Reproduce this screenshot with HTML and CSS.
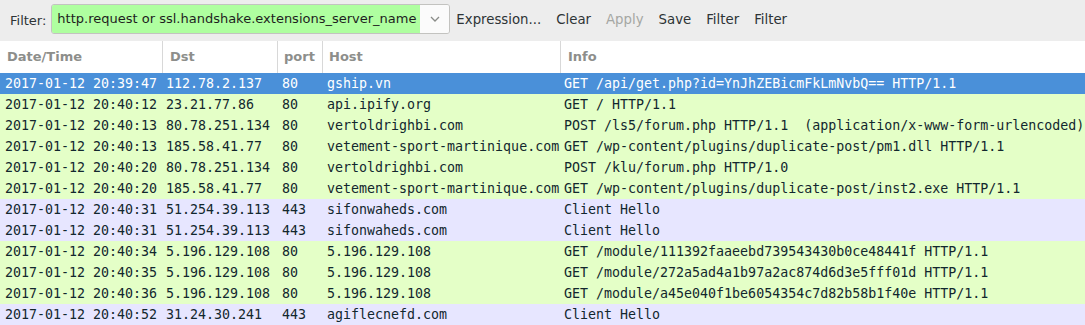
FILE: index.html
```html
<!DOCTYPE html>
<html>
<head>
  <meta charset="utf-8">
  <title>Packet List</title>
  <link rel="stylesheet" href="styles.css">
</head>
<body>
  <div class="toolbar">
    <span class="filter-label">Filter:</span>
    <div class="filter-box">
      <div class="filter-text">http.request or ssl.handshake.extensions_server_name</div>
      <div class="filter-drop">
        <svg width="10" height="6" viewBox="0 0 10 6"><polyline points="1,1 5,5 9,1" fill="none" stroke="#8a8c88" stroke-width="1.3"/></svg>
      </div>
    </div>
    <div class="tool-buttons">
      <span class="tool-btn">Expression...</span>
      <span class="tool-btn">Clear</span>
      <span class="tool-btn disabled">Apply</span>
      <span class="tool-btn">Save</span>
      <span class="tool-btn">Filter</span>
      <span class="tool-btn">Filter</span>
    </div>
  </div>

  <div class="list">
    <div class="row header">
      <div class="cell">Date/Time</div>
      <div class="cell">Dst</div>
      <div class="cell">port</div>
      <div class="cell">Host</div>
      <div class="cell">Info</div>
    </div>

    <div class="row selected">
      <div class="cell">2017-01-12 20:39:47</div><div class="cell">112.78.2.137</div><div class="cell">80</div><div class="cell">gship.vn</div><div class="cell">GET /api/get.php?id=YnJhZEBicmFkLmNvbQ== HTTP/1.1</div>
    </div>
    <div class="row http">
      <div class="cell">2017-01-12 20:40:12</div><div class="cell">23.21.77.86</div><div class="cell">80</div><div class="cell">api.ipify.org</div><div class="cell">GET / HTTP/1.1</div>
    </div>
    <div class="row http">
      <div class="cell">2017-01-12 20:40:13</div><div class="cell">80.78.251.134</div><div class="cell">80</div><div class="cell">vertoldrighbi.com</div><div class="cell">POST /ls5/forum.php HTTP/1.1  (application/x-www-form-urlencoded)</div>
    </div>
    <div class="row http">
      <div class="cell">2017-01-12 20:40:13</div><div class="cell">185.58.41.77</div><div class="cell">80</div><div class="cell">vetement-sport-martinique.com</div><div class="cell">GET /wp-content/plugins/duplicate-post/pm1.dll HTTP/1.1</div>
    </div>
    <div class="row http">
      <div class="cell">2017-01-12 20:40:20</div><div class="cell">80.78.251.134</div><div class="cell">80</div><div class="cell">vertoldrighbi.com</div><div class="cell">POST /klu/forum.php HTTP/1.0</div>
    </div>
    <div class="row http">
      <div class="cell">2017-01-12 20:40:20</div><div class="cell">185.58.41.77</div><div class="cell">80</div><div class="cell">vetement-sport-martinique.com</div><div class="cell">GET /wp-content/plugins/duplicate-post/inst2.exe HTTP/1.1</div>
    </div>
    <div class="row tcp">
      <div class="cell">2017-01-12 20:40:31</div><div class="cell">51.254.39.113</div><div class="cell">443</div><div class="cell">sifonwaheds.com</div><div class="cell">Client Hello</div>
    </div>
    <div class="row tcp">
      <div class="cell">2017-01-12 20:40:31</div><div class="cell">51.254.39.113</div><div class="cell">443</div><div class="cell">sifonwaheds.com</div><div class="cell">Client Hello</div>
    </div>
    <div class="row http">
      <div class="cell">2017-01-12 20:40:34</div><div class="cell">5.196.129.108</div><div class="cell">80</div><div class="cell">5.196.129.108</div><div class="cell">GET /module/111392faaeebd739543430b0ce48441f HTTP/1.1</div>
    </div>
    <div class="row http">
      <div class="cell">2017-01-12 20:40:35</div><div class="cell">5.196.129.108</div><div class="cell">80</div><div class="cell">5.196.129.108</div><div class="cell">GET /module/272a5ad4a1b97a2ac874d6d3e5fff01d HTTP/1.1</div>
    </div>
    <div class="row http">
      <div class="cell">2017-01-12 20:40:36</div><div class="cell">5.196.129.108</div><div class="cell">80</div><div class="cell">5.196.129.108</div><div class="cell">GET /module/a45e040f1be6054354c7d82b58b1f40e HTTP/1.1</div>
    </div>
    <div class="row tcp">
      <div class="cell">2017-01-12 20:40:52</div><div class="cell">31.24.30.241</div><div class="cell">443</div><div class="cell">agiflecnefd.com</div><div class="cell">Client Hello</div>
    </div>
  </div>
</body>
</html>
```

FILE: styles.css
```css
body {
  margin: 0;
  width: 1085px;
  height: 325px;
  overflow: hidden;
  background-color: white;
  font-family: "DejaVu Sans", sans-serif;
}
.toolbar {
  display: flex;
  align-items: center;
  height: 41px;
  background-color: #ededed;
  font-size: 13px;
  color: #2e3436;
}
.filter-label {
  margin-left: 10px;
  margin-right: 5px;
}
.filter-box {
  display: flex;
  width: 397px;
  height: 28px;
  border: 1px solid #c3c3c0;
  border-radius: 3px;
  overflow: hidden;
  margin-bottom: 3px;
}
.filter-text {
  flex: 1;
  background-color: #afffa0;
  padding-left: 5px;
  line-height: 28px;
  font-size: 13px;
  color: #1e1e1e;
  white-space: nowrap;
  overflow: hidden;
}
.filter-drop {
  width: 29px;
  background-color: #fbfbfb;
  display: flex;
  align-items: center;
  justify-content: center;
}
.tool-buttons {
  display: flex;
  gap: 15px;
  margin-left: 6px;
  margin-bottom: 3px;
  font-size: 13.3px;
}
.tool-btn.disabled {
  color: #a5a7a3;
}
.list {
  font-family: "DejaVu Sans Mono", monospace;
  font-size: 13.3px;
  color: #12272e;
}
.row {
  display: grid;
  grid-template-columns: 162px 115px 45px 238px 1fr;
  height: 21px;
  line-height: 21px;
  white-space: pre;
}
.row .cell {
  padding-left: 4px;
}
.row .cell:nth-child(1) {
  padding-left: 5px;
}
.row .cell:nth-child(3),
.row .cell:nth-child(4) {
  padding-left: 5px;
}
.header {
  height: 32px;
  line-height: 32px;
  font-family: "DejaVu Sans", sans-serif;
  font-size: 13px;
  font-weight: bold;
  color: #8d8e8b;
}
.header .cell {
  padding-left: 7px;
  border-left: 1px solid #d8d8d8;
}
.header .cell:nth-child(1) {
  padding-left: 7px;
  border-left: none;
}
.header .cell:nth-child(3),
.header .cell:nth-child(4) {
  padding-left: 6px;
}
.selected {
  background-color: #4a90d9;
  color: white;
}
.http {
  background-color: #e4ffc7;
}
.tcp {
  background-color: #e7e6ff;
}
```
